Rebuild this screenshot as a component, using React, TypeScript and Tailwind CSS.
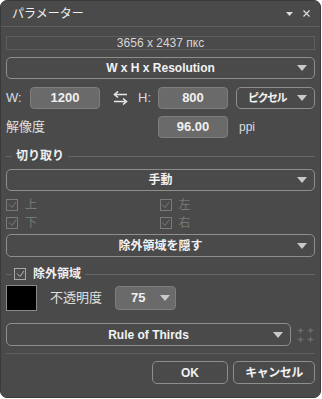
import React from "react";

const Arrow = ({ className = "" }: { className?: string }) => (
  <svg width="10" height="6" viewBox="0 0 10 6" className={className}>
    <path d="M0 0 H10 L5 6 Z" fill="#c9c9c9" />
  </svg>
);

const Dropdown = ({
  label,
  className = "",
  textClass = "",
}: {
  label: string;
  className?: string;
  textClass?: string;
}) => (
  <div
    className={`relative flex items-center justify-center rounded-[5px] border border-[#8e8e8e] text-[12px] font-bold text-[#f2f2f2] ${className}`}
  >
    <span className={textClass}>{label}</span>
    <Arrow className="absolute right-[7px] top-1/2 -translate-y-1/2" />
  </div>
);

const Check = ({ dim = false }: { dim?: boolean }) => (
  <div
    className={`flex h-[12px] w-[12px] items-center justify-center border ${
      dim ? "border-[#7a7a7a]" : "border-[#a8a8a8]"
    }`}
  >
    <svg width="9" height="8" viewBox="0 0 9 8">
      <path
        d="M1 3.5 L4 6.5 L8 1"
        fill="none"
        stroke={dim ? "#7a7a7a" : "#b8b8b8"}
        strokeWidth="1"
      />
    </svg>
  </div>
);

const Input = ({ value, className = "" }: { value: string; className?: string }) => (
  <div
    className={`flex h-[22px] items-center justify-center rounded-[4px] border border-[#7e7e7e] bg-[#6a6a6a] text-[13px] font-semibold text-[#f0f0f0] ${className}`}
  >
    {value}
  </div>
);

export default function App() {
  return (
    <div className="h-[399px] w-[322px] bg-white font-['Liberation_Sans','Noto_Sans_CJK_JP',sans-serif]">
      <div className="flex h-[398px] w-[321px] flex-col overflow-hidden rounded-[7px] border border-[#3a3a3a] bg-[#4a4a4a]">
        {/* title bar */}
        <div className="flex h-[26px] shrink-0 items-center border-b border-[#5f5f5f] pl-[11px] pr-[10px]">
          <span className="text-[12px] text-[#f0f0f0]">パラメーター</span>
          <div className="ml-auto flex items-center gap-[10px]">
            <svg width="7" height="4" viewBox="0 0 7 4">
              <path d="M0 0 H7 L3.5 4 Z" fill="#dcdcdc" />
            </svg>
            <svg width="7" height="7" viewBox="0 0 7 7">
              <path d="M0.5 0.5 L6.5 6.5 M6.5 0.5 L0.5 6.5" stroke="#dcdcdc" strokeWidth="1.2" />
            </svg>
          </div>
        </div>

        <div className="flex flex-col px-[5px]">
          {/* info */}
          <div className="mt-[9px] flex h-[14px] items-center justify-center border border-[#5e5e5e] text-[12px] text-[#d6d6d6]">
            3656 x 2437 пкс
          </div>

          <Dropdown label="W x H x Resolution" className="mt-[7px] h-[22px]" />

          {/* W H row */}
          <div className="mt-[8px] flex h-[22px] items-center">
            <span className="w-[24px] text-[13px] text-[#d8dce4]">W:</span>
            <Input value="1200" className="w-[70px]" />
            <div className="ml-[12px] flex w-[16px] justify-center">
              <svg width="15" height="14" viewBox="0 0 15 14">
                <path d="M14 3.5 H2.5" stroke="#e6e6e6" strokeWidth="1.6" />
                <path d="M5 0.5 L1.5 3.5 L5 6.5" stroke="#e6e6e6" strokeWidth="1.6" fill="none" />
                <path d="M1 10.5 H12.5" stroke="#e6e6e6" strokeWidth="1.6" />
                <path d="M10 7.5 L13.5 10.5 L10 13.5" stroke="#e6e6e6" strokeWidth="1.6" fill="none" />
              </svg>
            </div>
            <span className="ml-[10px] w-[20px] text-[13px] text-[#d8dce4]">H:</span>
            <Input value="800" className="w-[70px]" />
            <Dropdown
              label="ピクセル"
              className="ml-[8px] h-[22px] flex-1 justify-start pl-[11px]"
              textClass="text-[11px] font-semibold tracking-[-1.5px]"
            />
          </div>

          {/* resolution */}
          <div className="mt-[7px] flex h-[22px] items-center">
            <span className="w-[152px] text-[13px] text-[#e0e0e0]">解像度</span>
            <Input value="96.00" className="w-[70px]" />
            <span className="ml-[11px] text-[12px] text-[#d8dce4]">ppi</span>
          </div>

          {/* section crop */}
          <div className="mt-[11px] flex h-[14px] items-center">
            <div className="h-px w-[6px] bg-[#666]" />
            <span className="mx-[4px] text-[12px] font-bold text-[#f0f0f0]">切り取り</span>
            <div className="h-px flex-1 bg-[#666]" />
          </div>

          <Dropdown label="手動" className="mt-[6px] h-[22px]" />

          <div className="mt-[7px] grid grid-cols-2 gap-y-[5px] text-[12px] text-[#777]">
            <div className="flex h-[13px] items-center gap-[7px]">
              <Check dim />
              <span>上</span>
            </div>
            <div className="-ml-[1px] flex h-[13px] items-center gap-[7px]">
              <Check dim />
              <span>左</span>
            </div>
            <div className="flex h-[13px] items-center gap-[7px]">
              <Check dim />
              <span>下</span>
            </div>
            <div className="-ml-[1px] flex h-[13px] items-center gap-[7px]">
              <Check dim />
              <span>右</span>
            </div>
          </div>

          <Dropdown label="除外領域を隠す" className="mt-[5px] h-[23px]" />

          {/* section shield */}
          <div className="mt-[10px] flex h-[14px] items-center">
            <div className="h-px w-[6px] bg-[#666]" />
            <div className="ml-[2px]">
              <Check />
            </div>
            <span className="ml-[7px] mr-[4px] text-[12px] font-bold text-[#f0f0f0]">除外領域</span>
            <div className="h-px flex-1 bg-[#666]" />
          </div>

          <div className="mt-[4px] flex h-[26px] items-center">
            <div className="h-[26px] w-[31px] border border-[#8a8a8a] bg-black" />
            <span className="ml-[13px] text-[13px] text-[#e0e0e0]">不透明度</span>
            <div className="relative ml-[13px] flex h-[24px] w-[61px] items-center rounded-[4px] border border-[#7e7e7e] bg-[#6a6a6a] pl-[15px] text-[13px] font-bold text-[#f0f0f0]">
              75
              <Arrow className="absolute right-[5px] top-1/2 -translate-y-1/2" />
            </div>
          </div>

          <div className="mt-[12px] flex h-[23px] items-center">
            <Dropdown label="Rule of Thirds" className="h-[23px] w-[285px]" />
            <div className="ml-[6px] grid grid-cols-2 gap-x-[3px] gap-y-[2px]">
              {[0, 1, 2, 3].map((i) => (
                <svg key={i} width="7" height="7" viewBox="0 0 7 7">
                  <path d="M3.5 0 L4.5 2.5 L7 3.5 L4.5 4.5 L3.5 7 L2.5 4.5 L0 3.5 L2.5 2.5 Z" fill="#6a6a6a" />
                </svg>
              ))}
            </div>
          </div>

          <div className="mt-[7px] h-px bg-[#5f5f5f]" />

          <div className="mt-[7px] flex h-[23px] justify-end gap-[5px]">
            <div className="flex w-[76px] items-center justify-center rounded-[5px] border border-[#8e8e8e] text-[12px] font-bold text-[#f2f2f2]">
              OK
            </div>
            <div className="flex w-[82px] items-center justify-center rounded-[5px] border border-[#8e8e8e] text-[12px] font-bold tracking-[-0.5px] text-[#f2f2f2]">
              キャンセル
            </div>
          </div>
        </div>
      </div>
    </div>
  );
}
